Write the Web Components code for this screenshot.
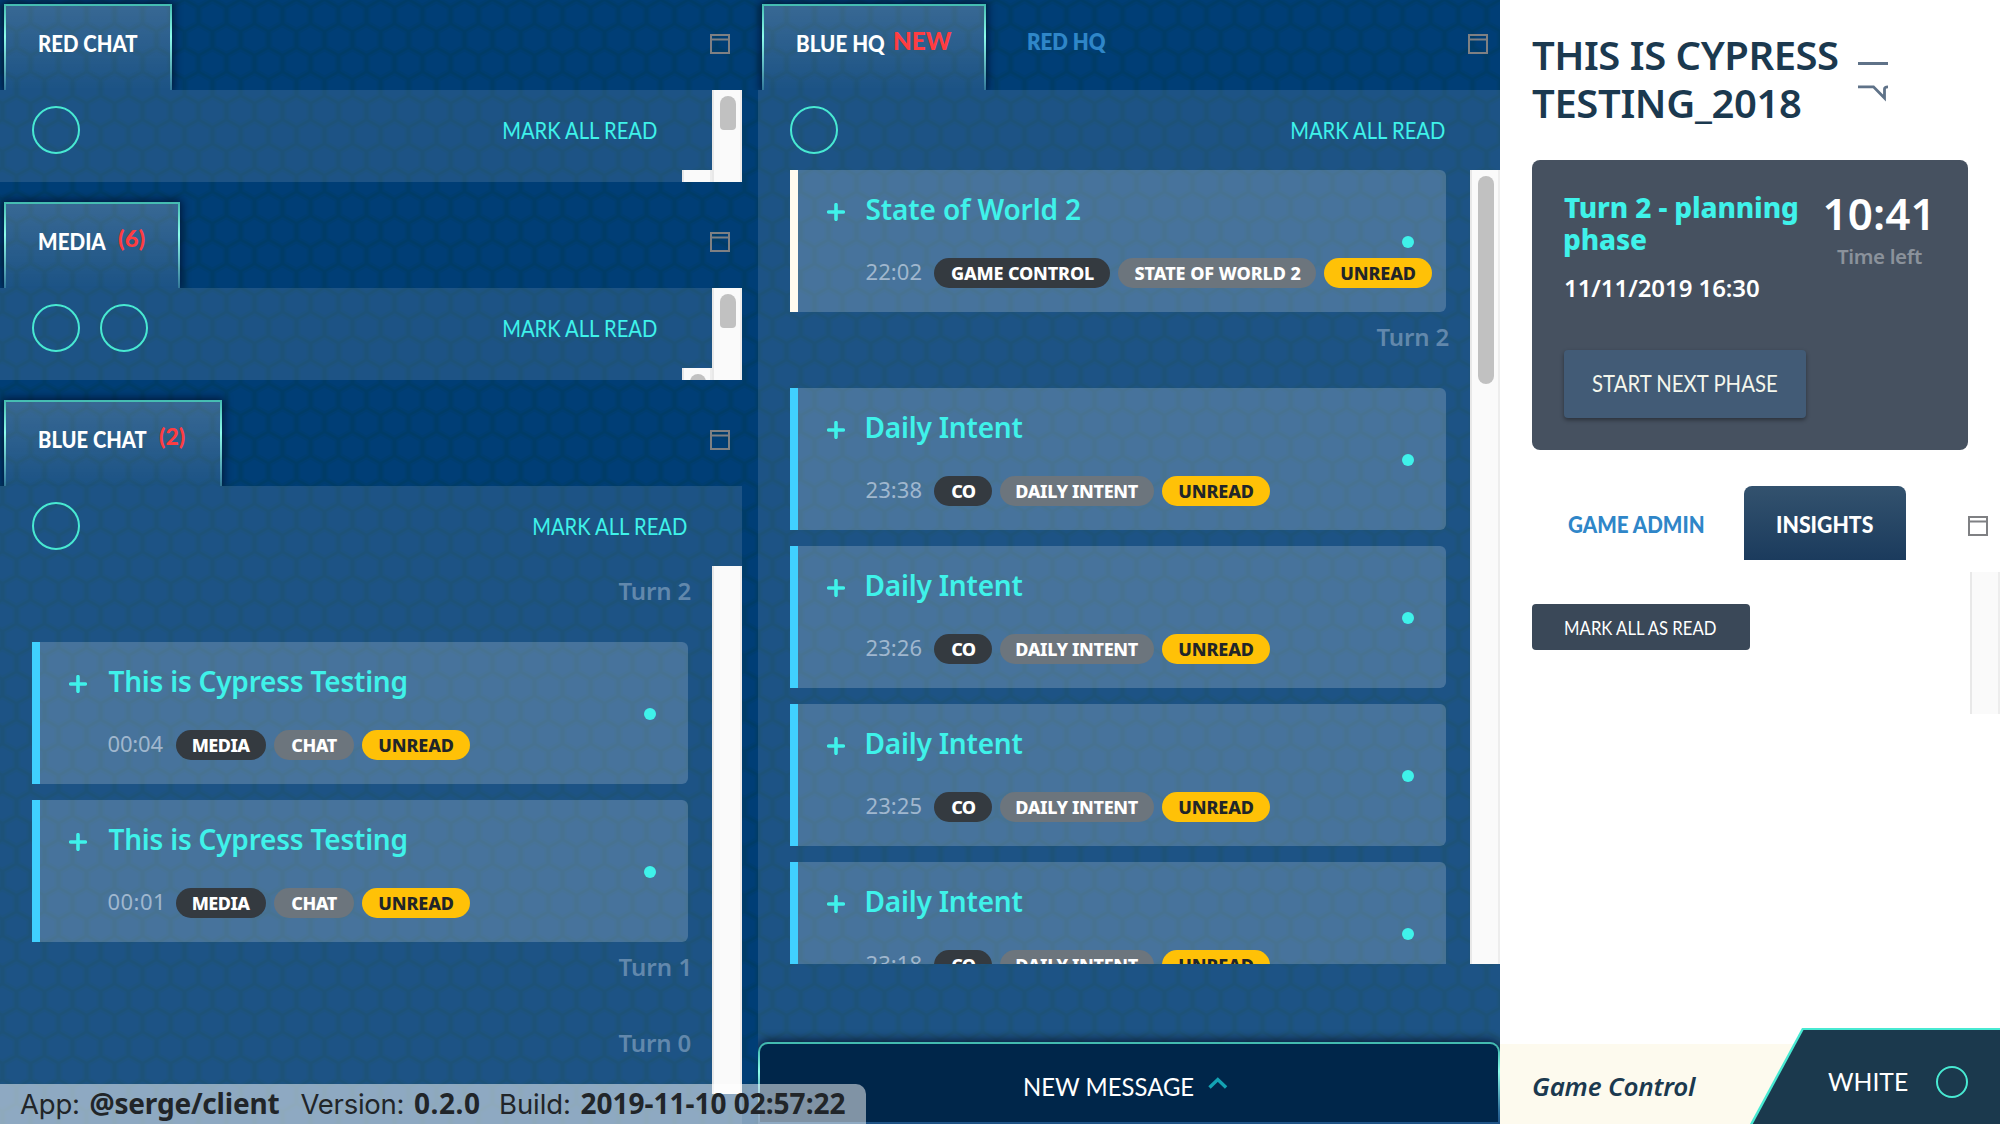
<!DOCTYPE html>
<html lang="en">
<head>
<meta charset="utf-8">
<title>Serge client</title>
<style>
html,body{margin:0;height:100%;overflow:hidden;background:#fff;font-family:"Noto Sans","Open Sans",sans-serif}
</style>
</head>
<body>
<serge-app></serge-app>
<script>
const CAPS = 'Lato,"Noto Sans",sans-serif';

function define(name, render) {
  customElements.define(name, class extends HTMLElement {
    connectedCallback() {
      if (this.shadowRoot) return;
      this.attachShadow({ mode: 'open' }).innerHTML = render(this);
    }
  });
}

define('serge-app', () => `
<style>
:host{display:grid;grid-template-columns:1500px 500px;width:2000px;height:1124px;position:relative;overflow:hidden}
.board{display:grid;grid-template-columns:742px 742px;gap:16px;height:1124px;min-height:0;background-color:#003c68;
background-image:url("data:image/svg+xml,%3Csvg xmlns='http://www.w3.org/2000/svg' width='28' height='48' viewBox='0 0 28 48'%3E%3Cg fill='%23003e76' stroke='%23003d70' stroke-width='2' stroke-linejoin='round'%3E%3Cpath d='M16.5 2.5l11 6v14l-11 6-11-6v-14zM2.5 26.500l11 6v14l-11 6-11-6v-14zM30.500 26.500l11 6v14l-11 6-11-6v-14zM2.500-21.500l11 6v14l-11 6-11-6v-14zM30.500-21.500l11 6v14l-11 6-11-6v-14zM-11.500 2.500l11 6v14l-11 6-11-6v-14z'/%3E%3C/g%3E%3C/svg%3E");background-size:28px 48px}
.left{display:flex;flex-direction:column;gap:16px}
.left>*{flex:none}
build-info{position:absolute;left:0;bottom:0}
</style>
<div class="board">
 <div class="left">
  <chat-channel size="small" label="RED CHAT" lw="99" tab="168"></chat-channel>
  <chat-channel size="small" label="MEDIA" lw="67" tab="176" count="(6)" cw="27" members="2" thumb></chat-channel>
  <chat-channel size="large" label="BLUE CHAT" lw="108" tab="218" count="(2)" cw="26">
   <turn-marker w="72">Turn 2</turn-marker>
   <message-card heading="This is Cypress Testing" hw="298" time="00:04" tags="MEDIA,57.5,90;CHAT,46.5,80"></message-card>
   <message-card class="next" heading="This is Cypress Testing" hw="298" time="00:01" tw="52.500" tags="MEDIA,57.5,90;CHAT,46.5,80"></message-card>
   <turn-marker w="70">Turn 1</turn-marker>
   <turn-marker w="72">Turn 0</turn-marker>
  </chat-channel>
 </div>
 <hq-channel></hq-channel>
</div>
<control-panel></control-panel>
<build-info></build-info>`);

define('window-icon', () => `
<style>:host{display:block;width:20px;height:20px}svg{display:block}</style>
<svg width="20" height="20" fill="none" stroke="#7f8083" stroke-width="2"><path d="M1 1h18v18H1zM1 5.400h18"/></svg>`);

define('scroll-track', el => {
  const h = el.getAttribute('thumb');
  return `
<style>
:host{display:block;box-sizing:border-box;width:30px;flex:none;background:#fafafa;border-left:2px solid #e8e8e8;border-right:2px solid #ededed;overflow:hidden}
i{display:block;width:16px;margin:6px 0 0 6px;border-radius:8px;background:#c1c1c1;height:${h || 0}px}
:host([short]) i{border-radius:8px 8px 4px 4px}</style><i></i>`;
});

define('channel-tab', el => `
<style>
:host{display:block;flex:none;box-sizing:border-box;height:86px;border:2px solid;border-bottom:0;
border-image:linear-gradient(#43bbb0,#8cfceb 37%,rgba(80,170,180,.35)) 2;
background:linear-gradient(rgba(255,255,255,.22),rgba(255,255,255,.11));box-shadow:0 0 8px 2px rgba(0,10,35,.7);clip-path:inset(-12px -12px 0 -12px)}
div{display:flex;padding:26px 0 0 32.500px;font:900 22.500px/24px ${CAPS};color:#fff}
.n{color:#ff3d41;margin:-3px 0 0 ${el.getAttribute('gap') || 12}px}
</style>
<div><fit-text w="${el.getAttribute('lw')}">${el.getAttribute('label')}</fit-text>${el.hasAttribute('count') ? `<fit-text class="n" style="font-size:${el.getAttribute('cs') || 22}px" w="${el.getAttribute('cw')}">${el.getAttribute('count')}</fit-text>` : ''}</div>`);

define('member-ring', () => `<style>:host{display:block;box-sizing:border-box;width:48px;height:48px;border:2px solid #48e9d2;border-radius:50%}</style>`);

define('channel-toolbar', el => `
<style>
:host{display:flex;box-sizing:border-box;height:80px;padding:16px 0 0 32px}
.m{display:flex;gap:20px;flex:1}
fit-text{font:400 22.500px/24px ${CAPS};color:#3ff2ea;margin:12.500px 0 0;flex:none}
</style>
<div class="m">${'<member-ring></member-ring>'.repeat(+(el.getAttribute('members') || 1))}</div>
<fit-text w="154.500">MARK ALL READ</fit-text>`);

define('chat-channel', el => {
  const small = el.getAttribute('size') === 'small';
  const m = el.getAttribute('members') || 1;
  const attr = n => el.hasAttribute(n) ? `${n}="${el.getAttribute(n)}"` : '';
  return `
<style>
:host{display:flex;flex-direction:column;width:742px;height:${small ? 182 : 728}px}
.head{display:flex;flex:none;height:86px;padding:4px 12px 0 4px;justify-content:space-between}
channel-tab{width:${el.getAttribute('tab')}px}
window-icon{margin-top:30px}
.body{flex:1;min-height:0;background:rgba(255,255,255,.112);display:flex;overflow:hidden}
.big{flex-direction:column}
channel-toolbar{width:${small ? 658 : 688}px;flex:none}
.pane{display:flex;height:528px;flex:none;justify-content:space-between}
.list{width:656px;margin-left:32px}
::slotted(.next){margin-top:16px}
.inner{margin:80px 0 0 24px;width:30px;flex:none;display:flex}
</style>
<div class="head"><channel-tab ${attr('label')} ${attr('lw')} ${attr('count')} ${attr('cw')}></channel-tab><window-icon></window-icon></div>
${small ? `<div class="body"><channel-toolbar members="${m}"></channel-toolbar><div class="inner"><scroll-track thumb="${el.hasAttribute('thumb') ? 40 : 0}"></scroll-track></div><scroll-track short thumb="34"></scroll-track></div>`
    : `<div class="body big"><channel-toolbar members="1"></channel-toolbar><div class="pane"><div class="list"><slot></slot></div><scroll-track></scroll-track></div></div>`}`;
});

define('turn-marker', el => `
<style>:host{display:flex;box-sizing:border-box;height:76px;padding:11px 0 0 586.500px;font:600 24px/28px "Noto Sans",sans-serif;color:#6288ac}fit-text{flex:none}</style>
<fit-text w="${el.getAttribute('w')}">${el.textContent}</fit-text>`);

define('tag-pill', el => `
<style>:host{display:flex;flex:none;justify-content:center;height:30px;border-radius:15px;background:#343a40;color:#fff;font:800 18px/30px "Noto Sans",sans-serif;width:${el.getAttribute('box')}px}
fit-text{margin-left:1px}
:host([kind="1"]){background:#6c757d}:host([kind="2"]){background:#ffc107;color:#212529}</style>
<fit-text w="${el.getAttribute('w')}">${el.textContent}</fit-text>`);

define('message-card', el => `
<style>
:host{display:flex;box-sizing:border-box;position:relative;height:142px;width:656px;border-left:8px solid ${el.getAttribute('edge') || '#40d0ff'};border-radius:0 6px 6px 0;background:rgba(255,255,255,.19);padding:23px 0 0 29px;gap:21.500px}
.plus{flex:none;margin-top:10px;display:block}
.h{font:600 28px/32px "Noto Sans",sans-serif;color:#3ff2ea;display:flex}
.f{display:flex;gap:8px;margin-top:33px}
.slot{width:59.500px;flex:none}
.t{font:400 22px/27px "Noto Sans",sans-serif;color:#a0b7ce}
.dot{position:absolute;right:32px;top:66px;width:12px;height:12px;border-radius:50%;background:#3ff2ea}
</style>
<svg class="plus" width="18" height="18" stroke="#3ff2ea" stroke-width="3.600" stroke-linecap="round"><path d="M1.700 9h14.600M9 1.700v14.600"/></svg>
<div><div class="h"><fit-text w="${el.getAttribute('hw')}">${el.getAttribute('heading')}</fit-text></div>
<div class="f"><div class="slot"><fit-text class="t" w="${el.getAttribute('tw') || 55}">${el.getAttribute('time')}</fit-text></div>${(el.getAttribute('tags') + ';UNREAD,74.5,108').split(';').map((t, i) => {
    const [s, w, b] = t.split(',');
    return `<tag-pill kind="${i}" w="${w}" box="${b}">${s}</tag-pill>`;
  }).join('')}</div></div><span class="dot"></span>`);

define('hq-channel', () => {
  const daily = t => `<message-card heading="Daily Intent" hw="156" time="${t}" tags="CO,24.500,58;DAILY INTENT,122.5,154"></message-card>`;
  return `
<style>
:host{display:flex;flex-direction:column;height:1124px;width:742px}
.head{display:flex;flex:none;box-sizing:border-box;height:90px;padding:4px 12px 0 4px}
channel-tab{width:224px}
.other{font:800 22.500px/24px ${CAPS};color:#2f86c8;margin:25.500px 0 0 42px}
window-icon{margin:30px 0 0 auto}
.body{flex:1;min-height:0;background:rgba(255,255,255,.112);display:flex;flex-direction:column}
channel-toolbar{width:688px;flex:none}
.pane{display:flex;height:794px;flex:none;overflow:hidden;justify-content:space-between}
.list{width:656px;margin-left:32px}
.list>message-card + message-card{margin-top:16px}
new-message{margin-top:auto}
</style>
<div class="head"><channel-tab label="BLUE HQ" lw="88.500" count="NEW" cw="57.500" gap="9" cs="24.500"></channel-tab><fit-text class="other" w="78">RED HQ</fit-text><window-icon></window-icon></div>
<div class="body"><channel-toolbar></channel-toolbar>
<div class="pane"><div class="list">
<message-card edge="#fffbef" heading="State of World 2" hw="213.500" time="22:02" tags="GAME CONTROL,143,176;STATE OF WORLD 2,166,198"></message-card>
<turn-marker w="72">Turn 2</turn-marker>
${daily('23:38')}${daily('23:26')}${daily('23:25')}${daily('23:18')}
</div><scroll-track thumb="208"></scroll-track></div>
<new-message></new-message></div>`;
});

define('new-message', () => `
<style>
:host{display:flex;box-sizing:border-box;height:82px;border:2px solid transparent;border-radius:10px 10px 0 0;
background:linear-gradient(#00264a,#00264a) padding-box,linear-gradient(#43bbb0,#43bbb0 8%,#8cfceb 36%,#2c6a98 85%,#1d5184) border-box;
box-shadow:0 -2px 10px rgba(0,10,30,.75);padding:34px 0 0 265px;gap:14px;font:400 25px/24px ${CAPS};color:#fff;clip-path:inset(-14px 0 0 0)}
fit-text{margin-top:-4px}
svg{margin-top:-1px}
</style>
<fit-text w="169">NEW MESSAGE</fit-text>
<svg width="20" height="13" fill="none" stroke="#13a3b4" stroke-width="3.400"><path d="M1.500 10.500L9.800 2.600l8.300 7.900"/></svg>`);

define('control-panel', () => `
<style>
:host{display:flex;flex-direction:column;height:1124px;width:500px;background:#fff}
.top{display:flex;box-sizing:border-box;padding:30.500px 0 0 32px;height:160px;flex:none;gap:20px}
h1{margin:0;font:600 40px/48px "Noto Sans",sans-serif;color:#1b394f;display:flex;flex-direction:column;width:306px}
.top svg{margin-top:30px;flex:none}
.card{box-sizing:border-box;margin:0 32px;height:290px;flex:none;background:#465160;border-radius:8px;padding:32px;display:flex;justify-content:space-between;flex-direction:column}
.row{display:flex;justify-content:space-between}
.turn{font:800 28px/32px "Noto Sans",sans-serif;color:#3ff2ea;display:flex;flex-direction:column;margin-top:-1px}
.date{font:600 24px/28px "Noto Sans",sans-serif;color:#fff;margin:19px 0 0 1px}
.clock{display:flex;flex-direction:column;align-items:center;width:120px;margin-right:-4px}
.clock .big{font:600 44px/44px "Noto Sans",sans-serif;color:#fff;margin:-1px 0 0 -6px}
.clock .sm{font:600 20.500px/24px "Noto Sans",sans-serif;color:#8b929b;margin:9px 0 0 -1px}
.btn{width:242px;height:68px;background:#425b76;border-radius:4px;box-shadow:0 2px 4px rgba(0,0,0,.4);display:flex;justify-content:center;font:400 22.500px/68px ${CAPS};color:#f4f6ec}
.tabs{display:flex;flex:none;height:74px;margin-top:36px;padding-left:68px;font:900 22.500px/77px ${CAPS}}
.tabs .a{color:#2f86c8}
.on{margin-left:40px;width:162px;height:74px;color:#fff;background:linear-gradient(#33526e,#1b3b5d);border-radius:8px 8px 0 0;display:flex;justify-content:center}
.tabs window-icon{margin:30px 12px 0 auto}
.pane{display:flex;justify-content:space-between;align-items:flex-start;margin-top:12px;height:142px}
.pane scroll-track{height:142px}
.mark{margin:32px 0 0 32px;width:218px;height:46px;border-radius:4px;background:#3a4858;color:#fff;display:flex;justify-content:center;font:400 18.500px/48px ${CAPS}}
role-footer{margin-top:auto}
</style>
<div class="top"><h1><fit-text w="306">THIS IS CYPRESS</fit-text><fit-text w="269">TESTING_2018</fit-text></h1>
<svg width="30" height="42" fill="none" stroke="#5f7288" stroke-width="2.800"><path d="M0 2.500h30M0 25.800h15.500l11 11.200v-9q0-2.200 3.500-2.200"/></svg></div>
<div class="card">
 <div class="row"><div><div class="turn"><fit-text w="233">Turn 2 - planning</fit-text><fit-text w="82">phase</fit-text></div><div class="date"><fit-text w="194">11/11/2019 16:30</fit-text></div></div>
 <div class="clock"><fit-text class="big" w="103">10:41</fit-text><fit-text class="sm" w="85">Time left</fit-text></div></div>
 <div class="btn"><fit-text w="186">START NEXT PHASE</fit-text></div>
</div>
<div class="tabs"><fit-text class="a" w="136">GAME ADMIN</fit-text><div class="on"><fit-text w="96">INSIGHTS</fit-text></div><window-icon></window-icon></div>
<div class="pane"><div class="mark"><fit-text w="153">MARK ALL AS READ</fit-text></div><scroll-track></scroll-track></div>
<role-footer></role-footer>`);

define('role-footer', () => `
<style>
:host{display:flex;height:96px;justify-content:space-between;background:linear-gradient(#fff 16px,#fdfaee 16px)}
.name{margin:42px 0 0 33px;font:italic 600 26px/32px "Noto Sans",sans-serif;color:#1b394f}
.force{box-sizing:border-box;width:250px;height:96px;background:#48e9d2;clip-path:polygon(52px 0,100% 0,100% 100%,0 100%)}
.in{box-sizing:border-box;height:96px;background:#1b394d;clip-path:polygon(53.500px 2px,100% 2px,100% 100%,2.800px 100%);display:flex;gap:28.500px;padding:38px 0 0 77.500px}
fit-text{flex:none}
.w{font:400 24.500px/31px ${CAPS};color:#fff}
i{box-sizing:border-box;width:32px;height:32px;border:2px solid #48e9d2;border-radius:50%}
</style>
<fit-text class="name" w="164">Game Control</fit-text>
<div class="force"><div class="in"><fit-text class="w" w="80">WHITE</fit-text><i></i></div></div>`);

define('build-info', () => `
<style>
:host{display:flex;box-sizing:border-box;width:866px;height:40px;padding-left:20px;background:rgba(255,255,255,.5);border-radius:0 10px 0 0;color:#212529;font:400 27.500px/40px Inter,sans-serif}
fit-text{flex:none}
.b{font:700 28px/38px "Noto Sans",sans-serif;margin:0 21px 0 12.500px}
</style>
<fit-text w="58">App:</fit-text><fit-text class="b" w="189">@serge/client</fit-text>
<fit-text w="102">Version:</fit-text><fit-text class="b" w="64" style="margin-right:22px">0.2.0</fit-text>
<fit-text w="68">Build:</fit-text><fit-text class="b" w="264">2019-11-10 02:57:22</fit-text>`);

/* A single line of text whose ink spans exactly `w` pixels:
   Lato caps are condensed, other faces are tracked. */
const pen = document.createElement('canvas').getContext('2d');
customElements.define('fit-text', class extends HTMLElement {
  connectedCallback() {
    if (!this.shadowRoot) {
      this.attachShadow({ mode: 'open' }).innerHTML =
        '<style>:host{display:block;white-space:nowrap}span{display:block;width:max-content;transform-origin:0 0}</style><span><slot></slot></span>';
    }
    this.fit();
  }
  fit() {
    const text = this.textContent, cs = getComputedStyle(this), w = +this.getAttribute('w');
    pen.font = `${cs.fontStyle} ${cs.fontWeight} ${cs.fontSize} ${cs.fontFamily}`;
    const m = pen.measureText(text);
    const left = m.actualBoundingBoxLeft, ink = left + m.actualBoundingBoxRight;
    const span = this.shadowRoot.querySelector('span');
    this.style.width = w + 'px';
    if (cs.fontFamily.startsWith('Lato')) {
      const k = w / ink;
      span.style.transform = `translateX(${(left * k).toFixed(2)}px) scaleX(${k.toFixed(4)})`;
    } else {
      span.style.letterSpacing = ((w - ink) / (text.length - 1)).toFixed(3) + 'px';
      span.style.marginLeft = left.toFixed(2) + 'px';
    }
  }
});
</script>
</body>
</html>
